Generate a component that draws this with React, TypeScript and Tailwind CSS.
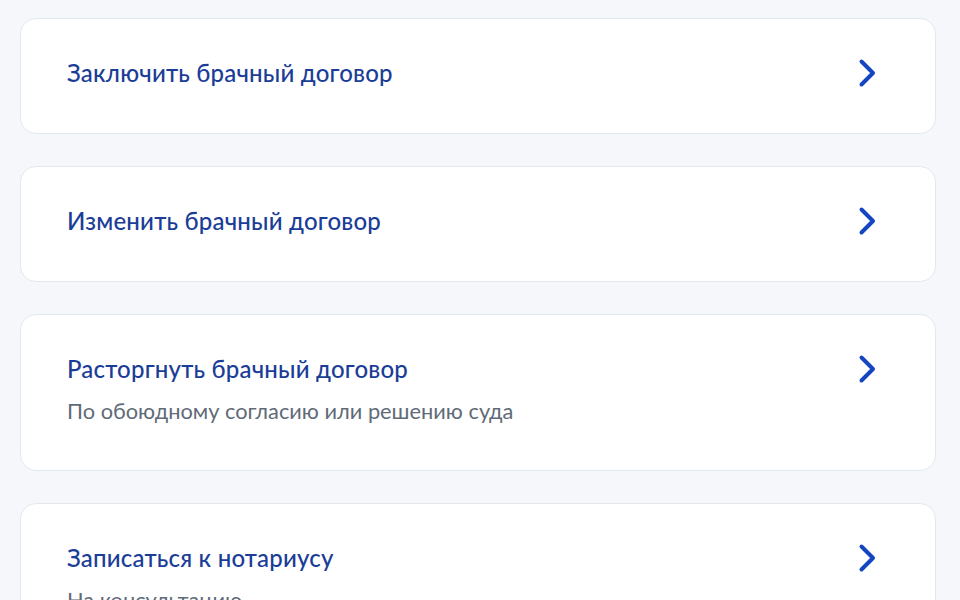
import React from "react";

const items = [
  { title: "Заключить брачный договор" },
  { title: "Изменить брачный договор" },
  { title: "Расторгнуть брачный договор", sub: "По обоюдному согласию или решению суда" },
  { title: "Записаться к нотариусу", sub: "На консультацию" },
];

function Chevron() {
  return (
    <svg width="20" height="30" viewBox="0 0 20 30" fill="none" className="shrink-0">
      <path d="M4.5 3.5 L16 15 L4.5 26.5" stroke="#1546c2" strokeWidth="4" strokeLinecap="round" strokeLinejoin="round" />
    </svg>
  );
}

export default function App() {
  return (
    <div
      className="w-[960px] h-[600px] overflow-hidden bg-[#f5f7fb] px-[20px] pt-[18px] flex flex-col gap-[32px]"
      style={{ fontFamily: "Lato, 'Noto Sans', sans-serif" }}
    >
      {items.map((it) => (
        <div
          key={it.title}
          className="shrink-0 w-[916px] bg-white border border-[#e3e8ef] rounded-[16px] pl-[46px] pr-[58px] pt-[39px] pb-[45px] flex items-start justify-between"
        >
          <div className="flex flex-col gap-[13px]">
            <div className="text-[24px] leading-[30px] font-medium text-[#1b3d97] tracking-[0.2px]">{it.title}</div>
            {it.sub && <div className="text-[21.8px] leading-[28px] text-[#5f6b78]">{it.sub}</div>}
          </div>
          <div className="h-[30px] flex items-center">
            <Chevron />
          </div>
        </div>
      ))}
    </div>
  );
}
